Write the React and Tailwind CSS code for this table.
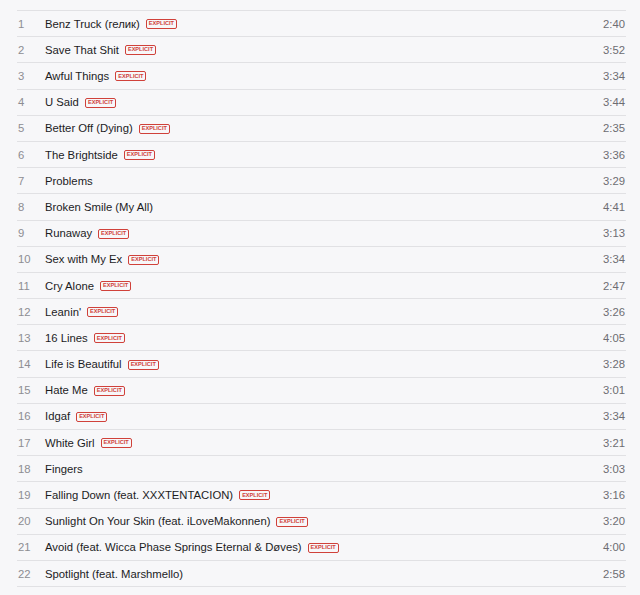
import React from 'react';

const tracks = [
  ['Benz Truck (гелик)', true, '2:40'],
  ['Save That Shit', true, '3:52'],
  ['Awful Things', true, '3:34'],
  ['U Said', true, '3:44'],
  ['Better Off (Dying)', true, '2:35'],
  ['The Brightside', true, '3:36'],
  ['Problems', false, '3:29'],
  ['Broken Smile (My All)', false, '4:41'],
  ['Runaway', true, '3:13'],
  ['Sex with My Ex', true, '3:34'],
  ['Cry Alone', true, '2:47'],
  ["Leanin'", true, '3:26'],
  ['16 Lines', true, '4:05'],
  ['Life is Beautiful', true, '3:28'],
  ['Hate Me', true, '3:01'],
  ['Idgaf', true, '3:34'],
  ['White Girl', true, '3:21'],
  ['Fingers', false, '3:03'],
  ['Falling Down (feat. XXXTENTACION)', true, '3:16'],
  ['Sunlight On Your Skin (feat. iLoveMakonnen)', true, '3:20'],
  ['Avoid (feat. Wicca Phase Springs Eternal & Døves)', true, '4:00'],
  ['Spotlight (feat. Marshmello)', false, '2:58'],
];

const Explicit = () => (
  <span className="ml-[6px] inline-flex h-[10px] items-center rounded-[2px] border border-[#d0413a] px-[2px] text-[5.6px] font-bold leading-none text-[#d0413a]">
    EXPLICIT
  </span>
);

export default function App() {
  return (
    <div className="min-h-[595px] w-[640px] bg-[#f7f7f9] pt-[10px] font-['Liberation_Sans',Arial,sans-serif]">
      <div className="ml-[17px] mr-[14px] border-b border-[#e1e1e4]">
        {tracks.map(([title, explicit, time], i) => (
          <div key={i} className="flex h-[26.2px] items-center border-t border-[#e1e1e4] pt-[1px] text-[11.3px]">
            <span className="w-[28px] shrink-0 pl-[1px] text-[#8d8d92]">{i + 1}</span>
            <span className="text-[#1c1c1e]">{title}</span>
            {explicit && <Explicit />}
            <span className="ml-auto pr-[1px] text-[#6d6d72]">{time}</span>
          </div>
        ))}
      </div>
    </div>
  );
}
